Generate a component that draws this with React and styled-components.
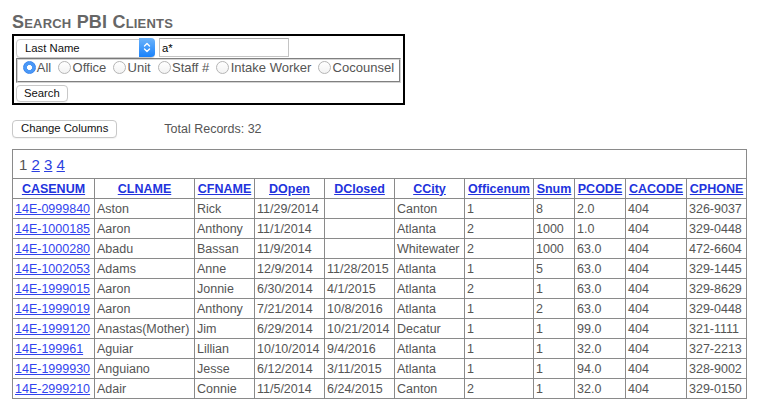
import React from "react";
import styled, { createGlobalStyle } from "styled-components";

const GlobalStyle = createGlobalStyle`
  html, body { margin: 0; padding: 0; background: #fff; }
  body { font-family: "Liberation Sans", Arial, Helvetica, sans-serif; color: #555; }
`;

const Page = styled.div`
  padding: 11px 0 0 12px;
  width: 751px;
  box-sizing: border-box;
`;

const Title = styled.h1`
  margin: 0;
  font-size: 18px;
  line-height: 22px;
  font-weight: bold;
  font-variant: small-caps;
  color: #666;
  letter-spacing: 0.2px;
`;

const SearchBox = styled.form`
  margin: 1px 0 0 0;
  width: 393px;
  box-sizing: border-box;
  border: 2px solid #000;
  padding: 2px 2px 1px 2px;
  display: flex;
  flex-direction: column;
  align-items: flex-start;
`;

const FieldRow = styled.div`
  display: flex;
  gap: 4px;
  height: 19px;
`;

const SelectWrap = styled.div`
  position: relative;
  width: 139px;
  height: 19px;
`;

const Select = styled.select`
  appearance: none;
  -webkit-appearance: none;
  width: 100%;
  height: 100%;
  margin: 0;
  box-sizing: border-box;
  border: 1px solid #c9c9c9;
  border-radius: 4px;
  background: #fff;
  padding: 0 0 0 8px;
  font-family: "Liberation Sans", Arial, sans-serif;
  font-size: 11.3px;
  color: #111;
  box-shadow: 0 1px 1px rgba(0,0,0,0.06);
`;

const SelectArrow = styled.span`
  position: absolute;
  right: 0;
  top: 0;
  width: 16px;
  height: 19px;
  border-radius: 0 4px 4px 0;
  background: linear-gradient(#6cb3fa, #1a82fb);
  display: flex;
  align-items: center;
  justify-content: center;
  pointer-events: none;
`;

const TextInput = styled.input`
  width: 130px;
  height: 19px;
  box-sizing: border-box;
  margin: 0;
  border: 1px solid #c4c4c4;
  border-top-color: #aaa;
  padding: 0 2px;
  font-family: "Liberation Sans", Arial, sans-serif;
  font-size: 11.3px;
  color: #000;
  outline: none;
`;

const RadioSet = styled.fieldset`
  margin: 1px 0 0 0;
  width: 385px;
  height: 25px;
  box-sizing: border-box;
  border: 2px groove #d4d4d4;
  padding: 0 0 0 4.5px;
  display: flex;
  align-items: center;
  gap: 7px;
  min-inline-size: 0;
`;

const RadioLabel = styled.label`
  display: flex;
  align-items: center;
  font-size: 13px;
  color: #555;
  white-space: nowrap;
`;

const Radio = styled.input`
  appearance: none;
  -webkit-appearance: none;
  width: 13px;
  height: 13px;
  margin: 0 1.3px 0 0;
  border-radius: 50%;
  box-sizing: border-box;
  border: 1px solid #b5b5b5;
  background: linear-gradient(#fff, #f3f3f3);
  &:checked {
    border-color: #3a86ee;
    background: radial-gradient(circle, #fff 0 2.2px, #4a98f7 2.8px);
  }
`;

const Button = styled.button`
  margin: ${(p) => p.$mt || 0}px 0 0 0;
  height: ${(p) => p.$h || 17}px;
  padding: 0 ${(p) => p.$px || 7}px;
  box-sizing: border-box;
  background: #fff;
  border: 1px solid #c8c8c8;
  border-radius: 4px;
  font-family: "Liberation Sans", Arial, sans-serif;
  font-size: 11.3px;
  color: #111;
  line-height: 1;
  box-shadow: 0 1px 1px rgba(0,0,0,0.05);
`;

const ToolRow = styled.div`
  margin-top: 15px;
  display: flex;
  align-items: center;
  height: 18px;
`;

const Total = styled.span`
  margin-left: 47px;
  font-size: 12.5px;
  color: #555;
`;

const Table = styled.table`
  margin-top: 11px;
  border-collapse: collapse;
  table-layout: fixed;
  width: 735px;
  font-size: 12.5px;
  color: #555;
  border: 1px solid #8a8a8a;
`;

const PagerCell = styled.td`
  height: 28px;
  padding: 0 0 0 6px;
  border: 1px solid #8a8a8a;
  font-size: 15px;
  color: #555;
  vertical-align: middle;
`;

const PageLink = styled.a`
  color: #2b3fe0;
  text-decoration: underline;
`;

const HeadCell = styled.th`
  height: 19px;
  padding: 0 1px;
  border: 1px solid #8a8a8a;
  text-align: center;
  font-weight: bold;
  white-space: nowrap;
  overflow: hidden;
`;

const HeadLink = styled.a`
  color: #2233dd;
  text-decoration: underline;
`;

const Cell = styled.td`
  height: 19px;
  padding: 0 2px;
  border: 1px solid #8a8a8a;
  white-space: nowrap;
  overflow: hidden;
`;

const CaseLink = styled.a`
  color: #3344ee;
  text-decoration: underline;
`;

const columns = [
  ["CASENUM", 82],
  ["CLNAME", 100],
  ["CFNAME", 60],
  ["DOpen", 70],
  ["DClosed", 70],
  ["CCity", 70],
  ["Officenum", 69],
  ["Snum", 41],
  ["PCODE", 51],
  ["CACODE", 61],
  ["CPHONE", 60],
];

const rows = [
  ["14E-0999840", "Aston", "Rick", "11/29/2014", "", "Canton", "1", "8", "2.0", "404", "326-9037"],
  ["14E-1000185", "Aaron", "Anthony", "11/1/2014", "", "Atlanta", "2", "1000", "1.0", "404", "329-0448"],
  ["14E-1000280", "Abadu", "Bassan", "11/9/2014", "", "Whitewater", "2", "1000", "63.0", "404", "472-6604"],
  ["14E-1002053", "Adams", "Anne", "12/9/2014", "11/28/2015", "Atlanta", "1", "5", "63.0", "404", "329-1445"],
  ["14E-1999015", "Aaron", "Jonnie", "6/30/2014", "4/1/2015", "Atlanta", "2", "1", "63.0", "404", "329-8629"],
  ["14E-1999019", "Aaron", "Anthony", "7/21/2014", "10/8/2016", "Atlanta", "1", "2", "63.0", "404", "329-0448"],
  ["14E-1999120", "Anastas(Mother)", "Jim", "6/29/2014", "10/21/2014", "Decatur", "1", "1", "99.0", "404", "321-1111"],
  ["14E-199961", "Aguiar", "Lillian", "10/10/2014", "9/4/2016", "Atlanta", "1", "1", "32.0", "404", "327-2213"],
  ["14E-1999930", "Anguiano", "Jesse", "6/12/2014", "3/11/2015", "Atlanta", "1", "1", "94.0", "404", "328-9002"],
  ["14E-2999210", "Adair", "Connie", "11/5/2014", "6/24/2015", "Canton", "2", "1", "32.0", "404", "329-0150"],
];

const radios = ["All", "Office", "Unit", "Staff #", "Intake Worker", "Cocounsel"];

export default function App() {
  return (
    <>
      <GlobalStyle />
      <Page>
        <Title>Search PBI Clients</Title>
        <SearchBox onSubmit={(e) => e.preventDefault()}>
          <FieldRow>
            <SelectWrap>
              <Select defaultValue="Last Name">
                <option>Last Name</option>
                <option>First Name</option>
                <option>Case Number</option>
              </Select>
              <SelectArrow>
                <svg width="8" height="11" viewBox="0 0 8 11" fill="none" stroke="#fff" strokeWidth="1.4" strokeLinecap="round" strokeLinejoin="round">
                  <path d="M1.5 4 L4 1.5 L6.5 4" />
                  <path d="M1.5 7 L4 9.5 L6.5 7" />
                </svg>
              </SelectArrow>
            </SelectWrap>
            <TextInput defaultValue="a*" />
          </FieldRow>
          <RadioSet>
            {radios.map((r, i) => (
              <RadioLabel key={r}>
                <Radio type="radio" name="scope" defaultChecked={i === 0} />
                {r}
              </RadioLabel>
            ))}
          </RadioSet>
          <Button type="submit" $mt={2} $h={17} $px={7}>Search</Button>
        </SearchBox>
        <ToolRow>
          <Button type="button" $h={18} $px={8}>Change Columns</Button>
          <Total>Total Records: 32</Total>
        </ToolRow>
        <Table>
          <colgroup>
            {columns.map(([c, w]) => (
              <col key={c} style={{ width: w }} />
            ))}
          </colgroup>
          <tbody>
            <tr>
              <PagerCell colSpan={11}>
                1 <PageLink href="#">2</PageLink> <PageLink href="#">3</PageLink>{" "}
                <PageLink href="#">4</PageLink>
              </PagerCell>
            </tr>
            <tr>
              {columns.map(([c]) => (
                <HeadCell key={c}>
                  <HeadLink href="#">{c}</HeadLink>
                </HeadCell>
              ))}
            </tr>
            {rows.map((r) => (
              <tr key={r[0]}>
                {r.map((v, i) => (
                  <Cell key={i}>
                    {i === 0 ? <CaseLink href="#">{v}</CaseLink> : v}
                  </Cell>
                ))}
              </tr>
            ))}
          </tbody>
        </Table>
      </Page>
    </>
  );
}
